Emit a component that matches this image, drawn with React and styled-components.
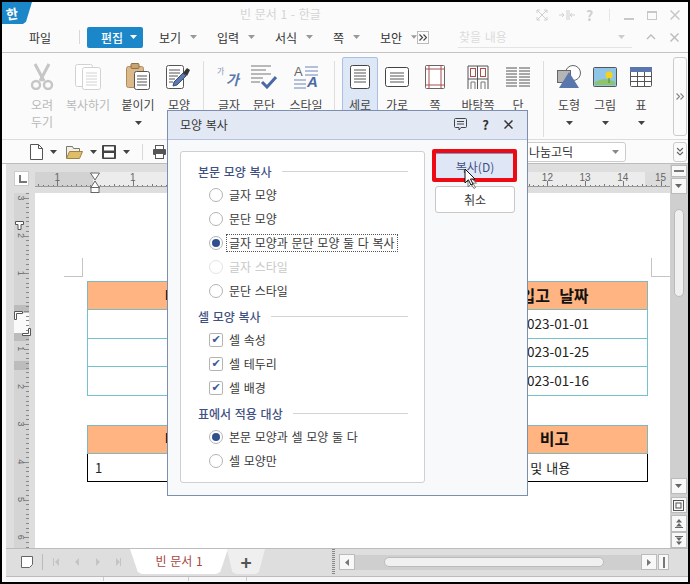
import React from 'react'
import styled, { createGlobalStyle } from 'styled-components'

const GlobalStyle = createGlobalStyle`
  html, body {
    margin: 0;
    padding: 0;
    background: #000;
  }
  body {
    font-family: "Noto Sans CJK KR", "Noto Sans", sans-serif;
    font-size: 12px;
    word-spacing: 1px;
    color: #333;
  }
  * {
    box-sizing: border-box;
  }
`

const range = (from, to) => {
  const out = []
  for (let i = from; i <= to; i++) out.push(i)
  return out
}

// #region icons
const Caret = ({ color = '#444' }) => (
  <svg width="7" height="4" viewBox="0 0 7 4">
    <path d="M0 0h7L3.5 4z" fill={color} />
  </svg>
)

const Chevrons = ({ down, color = '#666' }) => (
  <svg
    width="8"
    height="7"
    viewBox="0 0 8 7"
    fill="none"
    stroke={color}
    strokeWidth="1.2"
    style={down ? { transform: 'rotate(90deg)' } : undefined}
  >
    <path d="M.5.5l3 3-3 3M4.500.5l3 3-3 3" />
  </svg>
)

const Scissors = () => (
  <svg width="24" height="27" viewBox="0 0 24 27" fill="none" stroke="#c6c6c6">
    <path d="M5 1l9 17M19 1l-9 17" strokeWidth="3" />
    <circle cx="6" cy="22" r="4" strokeWidth="2.4" />
    <circle cx="18" cy="22" r="4" strokeWidth="2.4" />
  </svg>
)

const CopyDoc = () => (
  <svg width="26" height="26" viewBox="0 0 26 26" fill="#fff" stroke="#d2d2d2">
    <rect x="0.5" y="0.5" width="17" height="22" rx="2" />
    <rect x="7.5" y="3.5" width="18" height="22" rx="2" />
    <path d="M11 9h11M11 12h11M11 15h11M11 18h11M11 21h11" />
  </svg>
)

const Paste = () => (
  <svg width="24" height="27" viewBox="0 0 24 27">
    <rect x="0.5" y="3.5" width="17" height="21" rx="2" fill="#dcb98a" stroke="#b08c5c" />
    <rect x="5" y="0.5" width="8" height="5" rx="1" fill="#c9a470" stroke="#8f7348" />
    <rect x="8.5" y="8.5" width="15" height="18" rx="2" fill="#fff" stroke="#555" />
    <path d="M11 13h10M11 16h10M11 19h10M11 22h10" stroke="#555" />
  </svg>
)

const Painter = () => (
  <svg width="26" height="24" viewBox="0 0 26 24">
    <rect x="0.5" y="0.5" width="17" height="23" rx="2" fill="#fff" stroke="#555" />
    <path d="M3 5h11M3 8h11M3 11h9M3 14h6M3 17h4" stroke="#555" />
    <path d="M7 21l1-4 9-9 3 3-9 9z" fill="#5c78ad" stroke="#3a4f7c" />
    <path d="M17 8l4-5 3 2-3 6z" fill="#333" />
  </svg>
)

const CharIcon = () => (
  <svg width="24" height="26" viewBox="0 0 24 26">
    <text x="0" y="10" fontSize="8" fill="#8b97b4" fontFamily="Noto Sans CJK KR">가</text>
    <text x="9" y="21" fontSize="14" fontWeight="700" fontStyle="italic" fill="#5a76ad" fontFamily="Noto Sans CJK KR">가</text>
  </svg>
)

const ParaIcon = () => (
  <svg width="26" height="24" viewBox="0 0 26 24" fill="none">
    <path d="M0 1h20M0 5h15M0 9h20M0 13h12M0 17h9" stroke="#777" />
    <path d="M11 17l5 5 9-10" stroke="#4a6aa6" strokeWidth="3" />
  </svg>
)

const StyleIcon = () => (
  <svg width="25" height="28" viewBox="0 0 25 28" fill="none">
    <text x="0" y="13" fontSize="13" fill="#666" fontFamily="Liberation Sans">A</text>
    <path d="M11 4h13M11 8h13M11 12h13M0 17h12M0 21h12M0 25h12" stroke="#6f86b5" />
    <text x="13" y="24" fontSize="15" fontWeight="700" fontStyle="italic" fill="#4a6aa6" fontFamily="Liberation Sans">A</text>
  </svg>
)

const Portrait = () => (
  <svg width="20" height="24" viewBox="0 0 20 24" fill="#fff" stroke="#444">
    <rect x="0.5" y="0.5" width="19" height="23" rx="2" />
    <path d="M4 5h12M4 8h12M4 11h12M4 14h12M4 17h12" stroke="#555" />
  </svg>
)

const Landscape = () => (
  <svg width="24" height="20" viewBox="0 0 24 20" fill="#fff" stroke="#444">
    <rect x="0.5" y="0.5" width="23" height="19" rx="2" />
    <path d="M5 6h14M5 9h14M5 12h14M5 15h14" stroke="#555" />
  </svg>
)

const PageIcon = () => (
  <svg width="20" height="24" viewBox="0 0 20 24" fill="#fff">
    <rect x="0.5" y="0.5" width="19" height="23" rx="1" stroke="#666" />
    <path d="M4 0v24M16 0v24M0 4h20M0 20h20" stroke="#a8504c" />
  </svg>
)

const MasterIcon = () => (
  <svg width="22" height="24" viewBox="0 0 22 24" fill="none">
    <path d="M1 24V1h20v23" stroke="#555" />
    <path d="M10.5 1v23M1 14h20" stroke="#555" />
    <rect x="3.5" y="3.5" width="5" height="8" stroke="#a8504c" />
    <rect x="13.5" y="3.5" width="5" height="8" stroke="#a8504c" />
    <path d="M4 24v-7h4v7M14 24v-7h4v7" stroke="#777" />
  </svg>
)

const ColumnsIcon = () => (
  <svg width="24" height="20" viewBox="0 0 24 20" fill="none" stroke="#555">
    {[1, 4, 7, 10, 13, 16, 19].map(y => (
      <path key={y} d={`M0 ${y}h11M13 ${y}h11`} />
    ))}
  </svg>
)

const ShapeIcon = () => (
  <svg width="24" height="24" viewBox="0 0 24 24">
    <circle cx="16" cy="8" r="7.5" fill="#fff" stroke="#666" />
    <rect x="0.5" y="5.5" width="13" height="12" fill="#b5b5b5" stroke="#666" />
    <path d="M12 7l10 16H2z" fill="#5a76ad" />
  </svg>
)

const PictureIcon = () => (
  <svg width="24" height="20" viewBox="0 0 24 20">
    <rect x="0.5" y="0.5" width="23" height="19" rx="1" fill="#8fc6e8" stroke="#555" />
    <path d="M2 15q10-6 20 0v3H2z" fill="#8fc46a" />
    <circle cx="16" cy="8" r="3.6" fill="#f4d21f" />
    <path d="M16 11v5" stroke="#4a8a3a" />
  </svg>
)

const TableIcon = () => (
  <svg width="22" height="20" viewBox="0 0 22 20" fill="#fff" stroke="#555">
    <rect x="0.5" y="0.5" width="21" height="19" rx="1" />
    <rect x="0" y="0" width="22" height="5" fill="#5a76ad" stroke="none" />
    <path d="M0 9.5h22M0 14.5h22M7.5 5v15M14.5 5v15" />
  </svg>
)

const NewDoc = () => (
  <svg width="13" height="16" viewBox="0 0 13 16" fill="#fff" stroke="#555">
    <path d="M.5.5h8l4 4v11H.5z" />
    <path d="M8.5.5v4h4" fill="none" />
  </svg>
)

const Folder = () => (
  <svg width="17" height="14" viewBox="0 0 17 14">
    <path d="M.5 13V1.5h6l1 2h6v3" fill="#f4f0e2" stroke="#777" />
    <path d="M.5 13.5l3-7h13l-3 7z" fill="#e0bd6b" stroke="#9d8445" />
  </svg>
)

const Save = () => (
  <svg width="14" height="14" viewBox="0 0 14 14">
    <rect width="14" height="14" rx="1" fill="#444" />
    <rect x="2" y="1.5" width="10" height="4" fill="#fff" />
    <rect x="2" y="8" width="10" height="4.5" fill="#fff" />
  </svg>
)

const Printer = () => (
  <svg width="13" height="14" viewBox="0 0 13 14">
    <rect x="2.5" y="0.5" width="8" height="4" fill="#fff" stroke="#555" />
    <rect y="4" width="13" height="6" rx="1" fill="#555" />
    <rect x="2.5" y="8.5" width="8" height="5" fill="#fff" stroke="#555" />
  </svg>
)

const Memo = () => (
  <svg width="13" height="13" viewBox="0 0 13 13" fill="none" stroke="#444">
    <path d="M1.5.5h10a1 1 0 0 1 1 1v7a1 1 0 0 1-1 1H7l-2 2.5V9.5H1.5a1 1 0 0 1-1-1v-7a1 1 0 0 1 1-1z" />
    <path d="M3 3.5h7M3 6h7" />
  </svg>
)

const CloseX = ({ color = '#444', size = 9, width = 1.4 }) => (
  <svg width={size} height={size} viewBox="0 0 9 9" fill="none" stroke={color} strokeWidth={width}>
    <path d="M.5.5l8 8M8.5.5l-8 8" />
  </svg>
)

const Pointer = () => (
  <svg width="13" height="21" viewBox="0 0 13 21">
    <path d="M4 7v12l3-3 3 4.5 1.5-1-2.6-4.4h3.6z" fill="#fff" stroke="#777" />
    <path d="M1 1v14l3.4-3.2 2.6 5.2 2-1-2.5-5H11z" fill="#fff" stroke="#111" />
  </svg>
)

const HRulerArt = () => {
  const unit = 37.7
  const zero = 60
  return (
    <svg width="635" height="21" viewBox="0 0 635 21" style={{ display: 'block' }}>
      <rect width="635" height="15" fill="#ececec" />
      <rect width="58" height="15" fill="#d2d2d2" />
      <rect x="610" width="25" height="15" fill="#dcdcdc" />
      <rect y="15" width="635" height="6" fill="#dedede" />
      {range(-12, 136).map(i => {
        const x = Math.round(zero + (unit / 8) * i) + 0.5
        const tall = i % 8 === 0
        const mid = i % 4 === 0
        return <path key={i} d={`M${x} ${tall ? 9 : mid ? 12 : 13}V15`} stroke="#777" />
      })}
      <path d="M0 14.5H635" stroke="#999" />
      {[-1, 1, 12, 13, 14, 15].map(n => (
        <text
          key={n}
          x={zero + unit * n}
          y="9"
          fontSize="10"
          fill="#666"
          textAnchor="middle"
          fontFamily="Liberation Sans"
        >
          {Math.abs(n)}
        </text>
      ))}
      <path d="M55.5 1h9L60 8z" fill="#fff" stroke="#666" />
      <path d="M55.5 16h9L60 9z" fill="#fff" stroke="#666" />
      <rect x="56" y="15.5" width="8" height="5" fill="#fff" stroke="#666" />
    </svg>
  )
}

const VRulerArt = () => {
  const unit = 37.7
  const zero = 118
  return (
    <svg width="21" height="355" viewBox="0 0 21 355" style={{ display: 'block' }}>
      <rect width="15" height="355" fill="#d4d4d4" />
      <rect y="120" width="15" height="20" fill="#fafafa" />
      <rect y="112" width="15" height="8" fill="#bcbcbc" />
      <rect y="140" width="15" height="8" fill="#bcbcbc" />
      <rect y="168" width="15" height="9" fill="#bcbcbc" />
      {range(-28, 58).map(i => {
        const y = Math.round(zero + (unit / 8) * i) + 0.5
        const tall = i % 8 === 0
        return <path key={i} d={`M${tall ? 10 : 12} ${y}H15`} stroke="#888" />
      })}
      {range(-3, 6)
        .filter(n => n !== 0)
        .map(n => {
          const y = zero + unit * n
          return (
            <text
              key={n}
              x="4"
              y={y}
              fontSize="9"
              fill="#666"
              textAnchor="middle"
              fontFamily="Liberation Sans"
              transform={`rotate(90 4 ${y})`}
            >
              {Math.abs(n)}
            </text>
          )
        })}
      <path d="M1.5 28.5h8v3h-2.5v5h-3v-5h-2.500z" fill="#fff" stroke="#555" />
      <path d="M0.5 118.500h8v2h-6v6h-2z" fill="#fff" stroke="#555" />
      <path d="M16.500 135.500v7h-8v-2h6v-5z" fill="#fff" stroke="#555" />
    </svg>
  )
}
// #endregion

const ribbonItems = [
  { label: '오려', second: '두기', w: 40, icon: <Scissors />, off: true },
  { label: '복사하기', w: 52, icon: <CopyDoc />, off: true },
  { label: '붙이기', w: 48, icon: <Paste />, caret: true },
  { label: '모양', w: 34, icon: <Painter /> },
  { sep: 7, after: 7 },
  { label: '글자', w: 36, icon: <CharIcon /> },
  { label: '문단', w: 34, icon: <ParaIcon /> },
  { label: '스타일', w: 50, icon: <StyleIcon /> },
  { sep: 3, after: 7 },
  { label: '세로', w: 36, icon: <Portrait />, active: true },
  { label: '가로', w: 38, icon: <Landscape /> },
  { label: '쪽', w: 38, icon: <PageIcon /> },
  { label: '바탕쪽', w: 48, icon: <MasterIcon /> },
  { label: '단', w: 32, icon: <ColumnsIcon /> },
  { sep: 9, after: 7 },
  { label: '도형', w: 36, icon: <ShapeIcon />, caret: true },
  { label: '그림', w: 36, icon: <PictureIcon />, caret: true },
  { label: '표', w: 36, icon: <TableIcon />, caret: true },
]

const menus = [
  { label: '보기', w: 58 },
  { label: '입력', w: 58 },
  { label: '서식', w: 58 },
  { label: '쪽', w: 47 },
  { label: '보안', w: 37 },
]

const bookRows = ['2023-01-01', '2023-01-25', '2023-01-16']

const App = () => (
  <Frame>
    <GlobalStyle />
    <TitleBar>
      <Logo>
        <span>한</span>
      </Logo>
      <DocTitle>빈 문서 1 - 한글</DocTitle>
      <WindowTools>
        <svg width="12" height="12" viewBox="0 0 12 12" fill="none" stroke="#d0d0d0">
          <path d="M1 4V1h3M8 1h3v3M11 8v3H8M4 11H1V8M1 1l10 10M11 1L1 11" />
        </svg>
        <svg width="16" height="10" viewBox="0 0 16 10" fill="none" stroke="#d0d0d0">
          <path d="M8 0v10M10 0v10M0 5h5M11 5h5M3 3l2 2-2 2M13 3l-2 2 2 2" />
        </svg>
        <HelpGlyph>?</HelpGlyph>
        <ToolDivider />
        <MinGlyph />
        <MaxGlyph />
        <CloseX color="#c8c8c8" size={10} />
      </WindowTools>
    </TitleBar>

    <MenuBar>
      <FileMenu>파일</FileMenu>
      <MenuDivider />
      <ActiveMenu>
        편집
        <Caret color="#fff" />
      </ActiveMenu>
      {menus.map(m => (
        <MenuItem key={m.label} $w={m.w}>
          {m.label}
          <Caret color="#999" />
        </MenuItem>
      ))}
      <MoreButton>
        <Chevrons color="#444" />
      </MoreButton>
      <FindBox>
        찾을 내용
        <Caret color="#ccc" />
      </FindBox>
      <FindActions>
        <svg width="10" height="6" viewBox="0 0 10 6" fill="none" stroke="#bbb" strokeWidth="1.3">
          <path d="M1 5l4-4 4 4" />
        </svg>
        <CloseX color="#bbb" size={9} />
      </FindActions>
    </MenuBar>

    <Ribbon>
      {ribbonItems.map((item, i) =>
        item.sep ? (
          <RibbonDivider key={i} $before={item.sep} $after={item.after} />
        ) : (
          <RibbonItem key={item.label} $w={item.w} $active={item.active} $off={item.off}>
            <IconSlot>{item.icon}</IconSlot>
            <span>{item.label}</span>
            {item.second && <span>{item.second}</span>}
            {item.caret && (
              <CaretSlot>
                <Caret />
              </CaretSlot>
            )}
          </RibbonItem>
        ),
      )}
      <RibbonMore>
        <Chevrons color="#888" />
      </RibbonMore>
    </Ribbon>

    <Toolbar>
      <ToolIcon $w={36}>
        <NewDoc />
        <Caret />
      </ToolIcon>
      <ToolIcon $w={36}>
        <Folder />
        <Caret />
      </ToolIcon>
      <ToolIcon $w={36}>
        <Save />
        <Caret />
      </ToolIcon>
      <ToolDividerDark />
      <ToolIcon $w={26}>
        <Printer />
      </ToolIcon>
      <FontSelect>
        나눔고딕
        <Caret color="#888" />
      </FontSelect>
      <ToolbarMore>
        <Chevrons down />
      </ToolbarMore>
    </Toolbar>

    <Editor>
      <LeftRail>
        <RulerCorner />
        <VRulerArt />
      </LeftRail>
      <EditorMain>
        <HRulerArt />
        <Page>
          <CropRow>
            <CropMark $side="left" />
            <CropMark $side="right" />
          </CropRow>
          <DocTable>
            <colgroup>
              <col width="184" />
              <col width="190" />
              <col width="186" />
            </colgroup>
            <thead>
              <tr>
                <HeadCell>내용</HeadCell>
                <HeadCell />
                <HeadCell>입고&nbsp; 날짜</HeadCell>
              </tr>
            </thead>
            <tbody>
              {bookRows.map(d => (
                <tr key={d}>
                  <BodyCell />
                  <BodyCell />
                  <BodyCell>{d}</BodyCell>
                </tr>
              ))}
            </tbody>
          </DocTable>
          <DocTable $second>
            <colgroup>
              <col width="184" />
              <col width="190" />
              <col width="186" />
            </colgroup>
            <thead>
              <tr>
                <HeadCell>내용</HeadCell>
                <HeadCell />
                <HeadCell>비고</HeadCell>
              </tr>
            </thead>
            <tbody>
              <tr>
                <NoteCell $first>1</NoteCell>
                <NoteCell />
                <NoteCell $note>비고 및 내용</NoteCell>
              </tr>
            </tbody>
          </DocTable>
        </Page>
      </EditorMain>
      <ScrollRail>
        <RailButton $h={12} $gap={1}>
          <MinBar />
        </RailButton>
        <RailButton $h={16}>
          <Caret color="#666" />
        </RailButton>
        <RailTrack>
          <RailThumb />
        </RailTrack>
        <RailButton $h={16} $gap={3}>
          <Caret color="#666" />
        </RailButton>
        <RailButton $h={16} $gap={2}>
          <svg width="11" height="11" viewBox="0 0 11 11" fill="none" stroke="#555">
            <rect x="0.5" y="0.5" width="10" height="10" />
            <rect x="3" y="3" width="5" height="5" />
          </svg>
        </RailButton>
        <RailButton $h={17}>
          <svg width="8" height="9" viewBox="0 0 8 9" fill="#666">
            <path d="M4 0l3 3.500H1zM4 4l3 3.500H1zM0 8h8v1H0z" />
          </svg>
        </RailButton>
        <RailButton $h={16}>
          <svg width="8" height="9" viewBox="0 0 8 9" fill="#666">
            <path d="M0 0h8v1H0zM1 1.500h6L4 5zM1 5.500h6L4 9z" />
          </svg>
        </RailButton>
      </ScrollRail>
    </Editor>

    <TabBar>
      <TabTools>
        <svg width="12" height="12" viewBox="0 0 12 12" fill="#fff" stroke="#666">
          <path d="M.5.5h11v8l-3 3h-8z" />
        </svg>
        <TabDivider />
        <svg width="68" height="8" viewBox="0 0 68 8" fill="#c4c4c4">
          <path d="M0 0h1v8H0zM6 0v8L2 4zM26 0v8l-4-4zM43 0v8l4-4zM63 0v8l4-4zM67 0h1v8h-1z" />
        </svg>
      </TabTools>
      <DocTab>빈 문서 1</DocTab>
      <AddTab>+</AddTab>
      <Grip />
      <HScroll>
        <HScrollButton>
          <svg width="4" height="7" viewBox="0 0 4 7" fill="#777">
            <path d="M4 0v7L0 3.500z" />
          </svg>
        </HScrollButton>
        <HTrack>
          <HThumb />
        </HTrack>
        <HScrollButton>
          <svg width="4" height="7" viewBox="0 0 4 7" fill="#777">
            <path d="M0 0v7l4-3.500z" />
          </svg>
        </HScrollButton>
        <HScrollButton $narrow>
          <MinBarV />
        </HScrollButton>
      </HScroll>
    </TabBar>
    <StatusStrip>
      <StatusCell $w={98} />
      <StatusCell $w={85} />
      <StatusCell $w={58} />
    </StatusStrip>

    <Dialog>
      <DialogHead>
        <DialogTitle>모양 복사</DialogTitle>
        <DialogTools>
          <Memo />
          <DialogHelp>?</DialogHelp>
          <CloseX color="#333" size={9} width={1.5} />
        </DialogTools>
      </DialogHead>
      <DialogBody>
        <OptionPanel>
          <SectionTitle>본문 모양 복사</SectionTitle>
          <OptionRow>
            <Radio />글자 모양
          </OptionRow>
          <OptionRow>
            <Radio />문단 모양
          </OptionRow>
          <OptionRow>
            <Radio $on />
            <FocusLabel>글자 모양과 문단 모양 둘 다 복사</FocusLabel>
          </OptionRow>
          <OptionRow $off>
            <Radio $off />글자 스타일
          </OptionRow>
          <OptionRow>
            <Radio />문단 스타일
          </OptionRow>

          <SectionTitle $next>셀 모양 복사</SectionTitle>
          <OptionRow>
            <Check>✔</Check>셀 속성
          </OptionRow>
          <OptionRow>
            <Check>✔</Check>셀 테두리
          </OptionRow>
          <OptionRow>
            <Check>✔</Check>셀 배경
          </OptionRow>

          <SectionTitle $next>표에서 적용 대상</SectionTitle>
          <OptionRow>
            <Radio $on />본문 모양과 셀 모양 둘 다
          </OptionRow>
          <OptionRow>
            <Radio />셀 모양만
          </OptionRow>
        </OptionPanel>
        <DialogActions>
          <PrimaryButton>복사(D)</PrimaryButton>
          <CancelButton>취소</CancelButton>
        </DialogActions>
        <RedMark />
        <CursorMark>
          <Pointer />
        </CursorMark>
      </DialogBody>
    </Dialog>
  </Frame>
)

export default App

// #region styles
const Frame = styled.div`
  position: relative;
  display: flex;
  flex-direction: column;
  width: 690px;
  height: 584px;
  overflow: hidden;
  background: #fbfbfb;
  border: 2px solid #000;
`

const TitleBar = styled.div`
  position: relative;
  display: flex;
  align-items: flex-start;
  height: 20px;
  background: #fbfbfb;
`

const Logo = styled.div`
  display: flex;
  align-items: center;
  justify-content: center;
  width: 30px;
  height: 22px;
  padding-right: 10px;
  background: #1b87c9;
  clip-path: polygon(0 0, 100% 0, 80% 90%, 70% 100%, 0 100%);
  color: #fff;
  font-size: 13px;
  font-weight: 700;
  z-index: 1;

  span {
    transform: rotate(-8deg);
  }
`

const DocTitle = styled.div`
  position: absolute;
  left: 238px;
  top: 1px;
  color: #d4d4d4;
  font-size: 12px;
  line-height: 22px;
`

const WindowTools = styled.div`
  display: flex;
  align-items: center;
  gap: 11px;
  height: 26px;
  margin-left: auto;
  padding-right: 8px;
`

const HelpGlyph = styled.span`
  color: #d0d0d0;
  font-size: 14px;
  font-weight: 700;
  width: 10px;
`

const ToolDivider = styled.span`
  width: 1px;
  height: 12px;
  margin: 0 3px 0 2px;
  background: #e6e6e6;
`

const MinGlyph = styled.span`
  width: 10px;
  height: 2px;
  margin-top: 8px;
  margin-right: 2px;
  background: #c8c8c8;
`

const MaxGlyph = styled.span`
  width: 10px;
  height: 9px;
  margin-right: 2px;
  border: 1px solid #c8c8c8;
  border-top-width: 2px;
`

const MenuBar = styled.div`
  display: flex;
  align-items: center;
  height: 31px;
  padding: 0 0 0 27px;
  background: #fbfbfb;
  border-bottom: 1px solid #c4c4c4;
`

const FileMenu = styled.div`
  width: 50px;
  color: #333;
`

const MenuDivider = styled.span`
  width: 1px;
  height: 14px;
  margin-right: 7px;
  background: #d8d8d8;
`

const ActiveMenu = styled.div`
  display: flex;
  align-items: center;
  justify-content: space-between;
  width: 56px;
  height: 21px;
  margin-right: 16px;
  padding: 0 6px 0 14px;
  border-radius: 2px;
  background: #1b87c9;
  color: #fff;
  font-weight: 500;
`

const MenuItem = styled.div`
  display: flex;
  align-items: center;
  gap: 9px;
  width: ${p => p.$w}px;
  white-space: nowrap;
`

const MoreButton = styled.div`
  display: flex;
  align-items: center;
  justify-content: center;
  width: 12px;
  height: 13px;
  margin-right: 29px;
  border: 1px solid #bbb;
`

const FindBox = styled.div`
  display: flex;
  align-items: center;
  justify-content: space-between;
  width: 174px;
  height: 22px;
  padding: 0 7px 0 1px;
  border-bottom: 1px solid #e4e4e4;
  color: #dcdcdc;
`

const FindActions = styled.div`
  display: flex;
  align-items: center;
  gap: 14px;
  margin-left: 14px;
`

const Ribbon = styled.div`
  display: flex;
  align-items: flex-start;
  height: 87px;
  padding: 4px 0 0 20px;
  background: #fbfbfb;
  border-bottom: 1px solid #dcdcdc;
`

const RibbonItem = styled.div`
  display: flex;
  flex-direction: column;
  align-items: center;
  width: ${p => p.$w}px;
  height: 78px;
  padding-top: 4px;
  border: 1px solid ${p => (p.$active ? '#a9c0e4' : 'transparent')};
  border-radius: 2px 2px 0 0;
  background: ${p => (p.$active ? '#dde7f6' : 'transparent')};
  color: ${p => (p.$off ? '#b8b8b8' : '#444')};
  line-height: 17px;
`

const IconSlot = styled.div`
  display: flex;
  align-items: center;
  justify-content: center;
  height: 29px;
  margin-bottom: 5px;
`

const CaretSlot = styled.div`
  display: flex;
  justify-content: center;
  margin-top: 8px;
`

const RibbonDivider = styled.span`
  align-self: stretch;
  width: 1px;
  margin: 4px ${p => p.$after}px 2px ${p => p.$before}px;
  background: #dedede;
`

const RibbonMore = styled.div`
  display: flex;
  align-items: center;
  justify-content: center;
  width: 14px;
  height: 79px;
  margin-left: auto;
  margin-right: 1px;
  border: 1px solid #ccc;
  border-radius: 3px;
`

const Toolbar = styled.div`
  display: flex;
  align-items: center;
  height: 24px;
  padding-left: 28px;
  background: #fbfbfb;
  border-bottom: 1px solid #bcbcbc;
`

const ToolIcon = styled.div`
  display: flex;
  align-items: center;
  gap: 7px;
  width: ${p => p.$w}px;
`

const ToolDividerDark = styled.span`
  width: 1px;
  height: 16px;
  margin: 0 10px 0 4px;
  background: #d8d8d8;
`

const FontSelect = styled.div`
  display: flex;
  align-items: center;
  justify-content: space-between;
  width: 122px;
  height: 20px;
  margin-left: 325px;
  padding: 0 6px 0 24px;
  border: 1px solid #ccc;
  border-radius: 3px;
  background: #fff;
  font-size: 12px;
`

const ToolbarMore = styled.div`
  display: flex;
  align-items: center;
  justify-content: center;
  width: 14px;
  height: 20px;
  margin-left: auto;
  margin-right: 1px;
  border: 1px solid #ccc;
  border-radius: 3px;
`

const Editor = styled.div`
  display: flex;
  height: 384px;
  margin-left: 4px;
  background: #dedede;
`

const LeftRail = styled.div`
  display: flex;
  flex-direction: column;
  width: 29px;
  padding: 7px 0 0 8px;
`

const RulerCorner = styled.div`
  position: relative;
  width: 15px;
  height: 15px;
  margin-bottom: 7px;
  background: #fff;
  border: 1px solid #ccc;

  &::after {
    content: '';
    position: absolute;
    left: 4px;
    top: 3px;
    width: 6px;
    height: 6px;
    border-left: 2px solid #777;
    border-bottom: 2px solid #777;
  }
`

const EditorMain = styled.div`
  display: flex;
  flex-direction: column;
  width: 635px;
  padding-top: 8px;
`

const Page = styled.div`
  flex: 1;
  padding: 65px 0 0 29px;
  overflow: hidden;
  background: #fff;
`

const CropRow = styled.div`
  display: flex;
  justify-content: space-between;
  width: 606px;
  height: 19px;
`

const CropMark = styled.span`
  width: 19px;
  height: 19px;
  border-bottom: 1px solid #c4c4c4;
  ${p => (p.$side === 'left' ? 'border-right' : 'border-left')}: 1px solid #c4c4c4;
`

const DocTable = styled.table`
  width: 560px;
  margin: ${p => (p.$second ? '29px' : '4px')} 0 0 23px;
  border-collapse: collapse;
  table-layout: fixed;
`

const HeadCell = styled.th`
  height: 28px;
  padding: 0 0 2px;
  border: 1px solid #7fb9bb;
  border-left-color: #ffb482;
  border-right-color: #ffb482;
  background: #ffb482;
  color: #111;
  font-size: 16px;
  font-weight: 700;
  text-align: center;

  &:first-child {
    border-left-color: #7fb9bb;
  }
  &:last-child {
    border-right-color: #7fb9bb;
  }
`

const BodyCell = styled.td`
  height: 28.600px;
  padding: 0 0 2px;
  border-top: 1px solid #72c3cd;
  border-bottom: 1px solid #72c3cd;
  color: #222;
  font-size: 13.500px;
  text-align: center;

  &:first-child {
    border-left: 1px solid #72c3cd;
  }
  &:last-child {
    border-right: 1px solid #72c3cd;
  }
`

const NoteCell = styled.td`
  height: 28px;
  padding: 0 0 0 ${p => (p.$first ? '7px' : p.$note ? '41px' : '0')};
  border-bottom: 1px solid #000;
  color: #222;
  font-size: 13px;
  ${p => (p.$first ? 'border-left: 1px solid #000;' : '')}
  ${p => (p.$note ? 'border-right: 1px solid #000;' : '')}
`

const ScrollRail = styled.div`
  display: flex;
  flex-direction: column;
  align-items: center;
  width: 18px;
  padding: 1px 1px 0 0;
  background: #cfcfcf;
`

const RailButton = styled.div`
  display: flex;
  align-items: center;
  justify-content: center;
  flex: none;
  width: 16px;
  height: ${p => p.$h}px;
  margin-bottom: ${p => p.$gap || 0}px;
  background: #f8f8f8;
  border: 1px solid #bbb;
`

const MinBar = styled.span`
  width: 10px;
  height: 2px;
  background: #777;
`

const MinBarV = styled.span`
  width: 2px;
  height: 11px;
  background: #777;
`

const RailTrack = styled.div`
  flex: 1;
  padding-top: 15px;
`

const RailThumb = styled.div`
  width: 10px;
  height: 88px;
  border: 1px solid #bbb;
  border-radius: 5px;
  background: #f0f0f0;
`

const TabBar = styled.div`
  display: flex;
  align-items: flex-start;
  height: 29px;
  margin-left: 4px;
  background: #dedede;
  border-top: 1px solid #bcbcbc;
  border-bottom: 1px solid #bcbcbc;
`

const TabTools = styled.div`
  display: flex;
  align-items: center;
  gap: 9px;
  width: 124px;
  height: 26px;
  padding-left: 15px;
`

const TabDivider = styled.span`
  width: 1px;
  height: 16px;
  margin-right: 1px;
  background: #bbb;
`

const DocTab = styled.div`
  display: flex;
  align-items: center;
  justify-content: center;
  width: 98px;
  height: 25px;
  padding-bottom: 2px;
  background: #fff;
  color: #a8453f;
  font-size: 12px;
  clip-path: polygon(0 0, 100% 0, 92% 92%, 88% 100%, 12% 100%, 8% 92%);
`

const AddTab = styled.div`
  display: flex;
  align-items: center;
  justify-content: center;
  width: 38px;
  height: 25px;
  margin-left: -1px;
  background: #efefef;
  color: #555;
  font-size: 19px;
  font-weight: 700;
  clip-path: polygon(0 0, 100% 0, 84% 92%, 76% 100%, 24% 100%, 14% 92%);
`

const Grip = styled.span`
  width: 3px;
  height: 26px;
  margin-left: 67px;
  background: repeating-linear-gradient(to bottom, #888 0 1px, transparent 1px 2px);
`

const HScroll = styled.div`
  display: flex;
  align-items: center;
  flex: 1;
  height: 26px;
  margin-left: 4px;
  padding-right: 19px;
`

const HScrollButton = styled.div`
  display: flex;
  align-items: center;
  justify-content: center;
  width: ${p => (p.$narrow ? 11 : 16)}px;
  height: 16px;
  margin-left: ${p => (p.$narrow ? 1 : 0)}px;
  background: #f8f8f8;
  border: 1px solid #bbb;
`

const HTrack = styled.div`
  flex: 1;
  height: 15px;
  padding: 1px 37px 1px 29px;
  background: #cfcfcf;
`

const HThumb = styled.div`
  height: 10px;
  margin-top: 1px;
  border: 1px solid #bbb;
  border-radius: 5px;
  background: #f0f0f0;
`

const StatusStrip = styled.div`
  display: flex;
  height: 4px;
  margin-left: 4px;
  padding-left: 0;
  background: #f6f6f6;
`

const StatusCell = styled.span`
  width: ${p => p.$w}px;
  border-right: 1px solid #ccc;
`

const Dialog = styled.div`
  position: absolute;
  left: 165px;
  top: 108px;
  display: flex;
  flex-direction: column;
  width: 361px;
  height: 386px;
  border: 1px solid #7d8fae;
  background: #f7f9fb;
`

const DialogHead = styled.div`
  display: flex;
  align-items: center;
  justify-content: space-between;
  height: 29px;
  padding: 0 14px 1px 12px;
  background: #e3e8f5;
  border-bottom: 1px solid #b7c2de;
`

const DialogTitle = styled.div`
  color: #333;
  font-size: 12px;
`

const DialogTools = styled.div`
  display: flex;
  align-items: center;
  gap: 15px;
`

const DialogHelp = styled.span`
  color: #333;
  font-size: 13px;
  font-weight: 700;
`

const DialogBody = styled.div`
  position: relative;
  display: flex;
  align-items: flex-start;
  flex: 1;
  padding: 11px 12px 0 12px;
`

const OptionPanel = styled.div`
  display: flex;
  flex-direction: column;
  width: 246px;
  height: 332px;
  padding: 8px 16px 8px 17px;
  border: 1px solid #cfcfcf;
  border-radius: 3px;
  background: #fff;
`

const SectionTitle = styled.div`
  display: flex;
  align-items: center;
  gap: 10px;
  height: 24px;
  margin: ${p => (p.$next ? '2px' : '0')} 0 -1px;
  padding-bottom: 1px;
  color: #3f5182;
  font-weight: 500;

  &::after {
    content: '';
    flex: 1;
    height: 1px;
    background: #d4d4d4;
  }
`

const OptionRow = styled.div`
  display: flex;
  align-items: center;
  flex: none;
  height: 24px;
  padding-left: 11px;
  padding-bottom: 1px;
  color: ${p => (p.$off ? '#c8c8c8' : '#3a3a3a')};
`

const Radio = styled.span`
  position: relative;
  flex: none;
  width: 14px;
  height: 14px;
  margin-right: 6px;
  border: 1px solid ${p => (p.$off ? '#e4e4e4' : '#b4b4b4')};
  border-radius: 50%;
  background: #fff;

  ${p =>
    p.$on
      ? `&::after {
    content: '';
    position: absolute;
    left: 2px;
    top: 2px;
    width: 8px;
    height: 8px;
    border-radius: 50%;
    background: #2f4f8f;
  }`
      : ''}
`

const Check = styled.span`
  display: flex;
  align-items: center;
  justify-content: center;
  flex: none;
  width: 14px;
  height: 14px;
  margin-right: 6px;
  border: 1px solid #b4b4b4;
  border-radius: 2px;
  color: #3c5a9c;
  font-family: "DejaVu Sans", sans-serif;
  font-size: 11px;
  line-height: 1;
`

const FocusLabel = styled.span`
  height: 18px;
  margin-left: -3px;
  padding: 0 2px;
  border: 1px dotted #555;
  line-height: 16px;
`

const DialogActions = styled.div`
  display: flex;
  flex-direction: column;
  align-items: center;
  gap: 7px;
  width: 80px;
  margin: 2px 0 0 10px;
`

const PrimaryButton = styled.div`
  display: flex;
  align-items: center;
  justify-content: center;
  width: 80px;
  height: 26px;
  border: 1px solid #7f95c6;
  border-radius: 2px;
  background: #dfe7f6;
  color: #3f5182;
`

const CancelButton = styled.div`
  display: flex;
  align-items: center;
  justify-content: center;
  width: 80px;
  height: 27px;
  border: 1px solid #c8c8c8;
  border-radius: 3px;
  background: #fff;
  color: #3a3a3a;
`

const RedMark = styled.div`
  position: absolute;
  left: 264px;
  top: 9px;
  width: 85px;
  height: 33px;
  border: 4px solid #ee0a14;
  border-radius: 2px;
`

const CursorMark = styled.div`
  position: absolute;
  left: 296px;
  top: 28px;
  display: flex;
`
// #endregion
